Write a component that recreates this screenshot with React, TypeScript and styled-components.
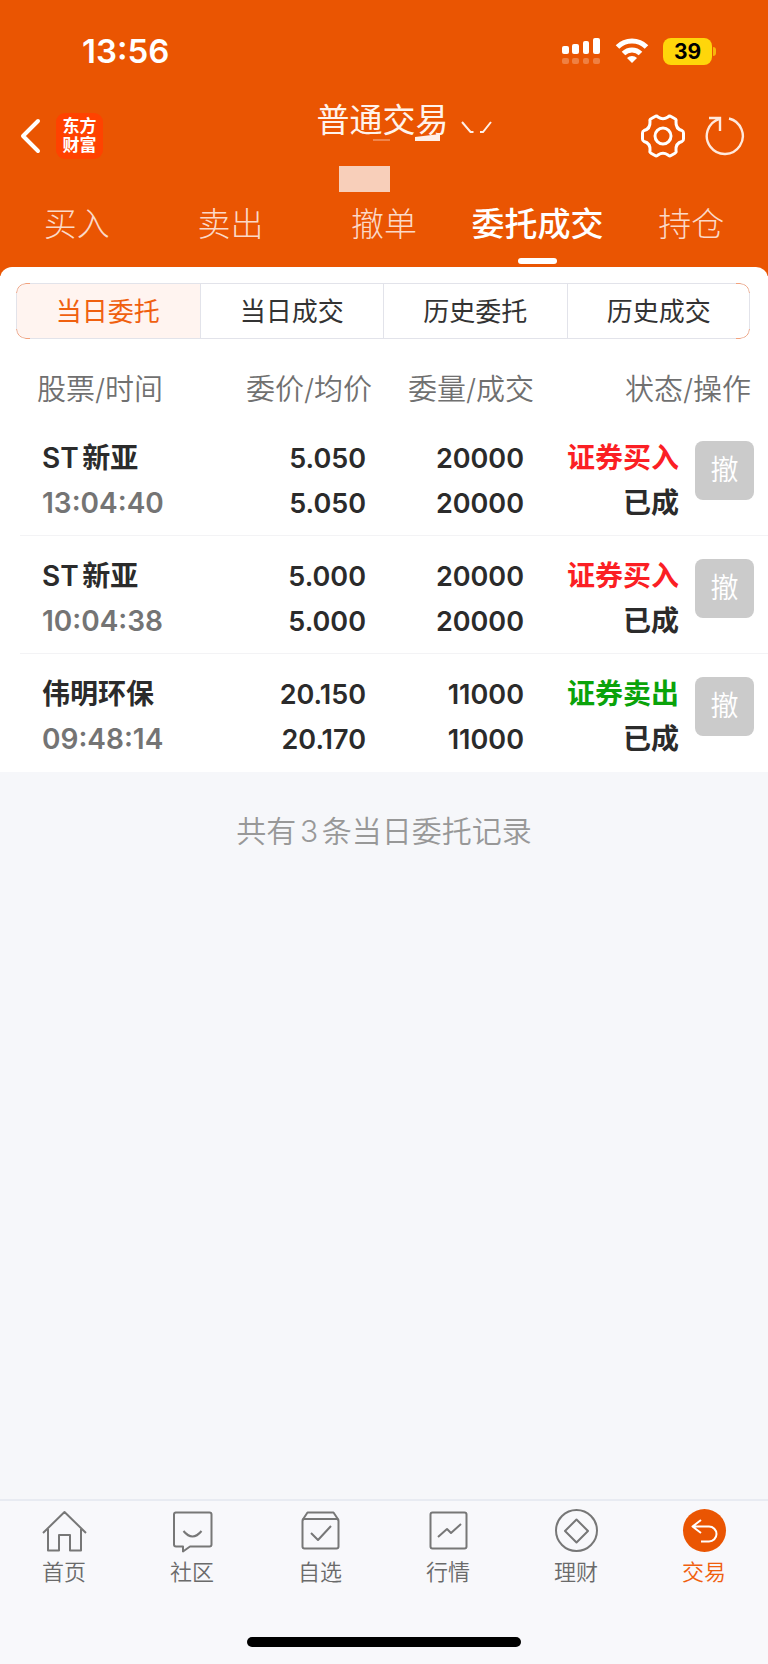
import React from "react";
import styled, { createGlobalStyle } from "styled-components";

const ORANGE = "#ea5502";

const GlobalStyle = createGlobalStyle`
  * { box-sizing: border-box; }
  body {
    margin: 0;
    background: #f6f7fa;
    font-family: Inter, "Noto Sans CJK SC", sans-serif;
    color: #2b2b2b;
    text-autospace: normal;
  }
  button { font-family: inherit; border: 0; background: none; padding: 0; cursor: pointer; }
  svg { display: block; }
`;

const Page = styled.div`
  min-height: 100vh;
  display: flex;
  flex-direction: column;
`;

const Top = styled.header`
  background: ${ORANGE};
  color: #fff;
  padding-bottom: 12px;
`;

const StatusBar = styled.div`
  height: 102px;
  padding: 0 52px 0 82px;
  display: flex;
  align-items: center;
  justify-content: space-between;
`;

const Clock = styled.time`
  font-size: 33px;
  font-weight: 600;
`;

const Indicators = styled.div`
  display: flex;
  align-items: center;
  gap: 14px;
`;

const BatteryBox = styled.div`
  display: flex;
  align-items: center;
  gap: 1px;
`;

const BatteryLevel = styled.span`
  width: 49px;
  height: 27px;
  border-radius: 8px;
  background: #ffd60a;
  color: #000;
  font-size: 21px;
  font-weight: 700;
  line-height: 27px;
  text-align: center;
`;

const BatteryTip = styled.span`
  width: 3px;
  height: 9px;
  border-radius: 0 4px 4px 0;
  background: #f7b50a;
`;

const TitleBar = styled.div`
  display: grid;
  grid-template-columns: 1fr auto 1fr;
  align-items: start;
  height: 98px;
  padding: 0 23px 0 20px;
`;

const Side = styled.div<{ $end?: boolean }>`
  height: 68px;
  display: flex;
  align-items: center;
  justify-content: ${(p) => (p.$end ? "flex-end" : "flex-start")};
  gap: ${(p) => (p.$end ? "20px" : "14px")};
`;

const Logo = styled.a`
  width: 47px;
  height: 46px;
  border-radius: 9px;
  background: #ff4200;
  color: #fff;
  font-size: 17px;
  font-weight: 700;
  line-height: 19px;
  padding-top: 4px;
  text-align: center;
  text-decoration: none;
`;

const TitleBlock = styled.div`
  display: flex;
  flex-direction: column;
  align-items: center;
  gap: 28px;
`;

const Title = styled.h1`
  position: relative;
  margin: 0;
  font-size: 33px;
  font-weight: 400;
  line-height: 36px;
  color: #fff3ec;
`;

const TitleMarks = styled.svg`
  position: absolute;
  left: 0;
  top: 0;
`;

const MaskedAccount = styled.div`
  width: 51px;
  height: 26px;
  margin-right: 36px;
  background: #f8cfba;
`;

const Tabs = styled.nav`
  display: grid;
  grid-template-columns: repeat(5, 1fr);
`;

const Tab = styled.button<{ $active?: boolean }>`
  display: flex;
  flex-direction: column;
  align-items: center;
  gap: 10px;
  font-size: 33px;
  line-height: 48px;
  white-space: nowrap;
  font-weight: ${(p) => (p.$active ? 500 : 300)};
  color: ${(p) => (p.$active ? "#fff" : "#fbd9c8")};
  &::after {
    content: "";
    width: 39px;
    height: 6px;
    border-radius: 3px;
    background: ${(p) => (p.$active ? "#fff" : "transparent")};
  }
`;

const Card = styled.main`
  margin-top: -9px;
  padding-top: 16px;
  background: #fff;
  border-radius: 12px 12px 0 0;
`;

const Segments = styled.div`
  position: relative;
  display: grid;
  grid-template-columns: repeat(4, 1fr);
  margin: 0 18px 0 16px;
  border-radius: 10px;
  overflow: hidden;
`;

/* Outline of the group; the accent variant shows only at the rounded corners. */
const Outline = styled.span<{ $accent?: boolean }>`
  position: absolute;
  inset: 0;
  border: 1px solid ${(p) => (p.$accent ? "#f4a27c" : "#e2e3ea")};
  border-radius: 10px;
  pointer-events: none;
  ${(p) =>
    p.$accent &&
    `
    mask:
      linear-gradient(to right, #000 14px, transparent 14px calc(100% - 14px), #000 calc(100% - 14px)),
      linear-gradient(to bottom, #000 10px, transparent 10px calc(100% - 10px), #000 calc(100% - 10px));
    mask-composite: intersect;
  `}
`;

const Segment = styled.button<{ $active?: boolean }>`
  height: 56px;
  padding-bottom: 3px;
  font-size: 26px;
  color: ${(p) => (p.$active ? "#f0600f" : "#333")};
  background: ${(p) => (p.$active ? "#fff4f0" : "#fff")};
  & + & { border-left: 1px solid #e2e3ea; }
`;

const Table = styled.table`
  width: calc(100% - 20px);
  margin: 23px 0 0 20px;
  table-layout: fixed;
  border-collapse: separate;
  border-spacing: 0;
`;

const Col = styled.col<{ $width?: number }>`
  width: ${(p) => (p.$width ? `${p.$width}px` : "auto")};
`;

const Th = styled.th<{ $align?: string; $pad?: number }>`
  height: 56px;
  padding: 0 ${(p) => p.$pad ?? 0}px 0 17px;
  font-size: 29px;
  font-weight: 350;
  line-height: 56px;
  color: #707070;
  white-space: nowrap;
  text-align: ${(p) => p.$align ?? "right"};
`;

const Td = styled.td<{ $align?: string; $pad?: number }>`
  height: 118px;
  padding: 18px ${(p) => p.$pad ?? 6}px 9px 22px;
  vertical-align: top;
  line-height: 45px;
  white-space: nowrap;
  text-align: ${(p) => p.$align ?? "right"};
`;

const StatusTd = styled(Td)`
  padding-left: 0;
`;

const ActionTd = styled(Td)`
  padding: 23px 14px 0 0;
`;

const Row = styled.tr`
  &:not(:last-child) > td { border-bottom: 1px solid #f3f3f5; }
`;

const Figure = styled.div`
  font-size: 27px;
  font-weight: 600;
`;

const Time = styled.div`
  font-size: 28px;
  font-weight: 600;
  color: #747474;
`;

const Label = styled.div<{ $tone?: "buy" | "sell" }>`
  font-size: 28px;
  font-weight: 600;
  color: ${(p) => (p.$tone === "buy" ? "#fb1f24" : p.$tone === "sell" ? "#0aa30a" : "inherit")};
`;

const CancelButton = styled.button`
  display: block;
  margin-left: auto;
  width: 59px;
  height: 59px;
  border-radius: 8px;
  background: #cbcbcb;
  color: #fff;
  font-size: 28px;
  font-weight: 350;
  line-height: 59px;
`;

const Summary = styled.p`
  flex: 1;
  margin: 0;
  padding-top: 39px;
  font-size: 30px;
  font-weight: 350;
  line-height: 40px;
  text-align: center;
  color: #989898;
`;

const Bottom = styled.footer`
  border-top: 2px solid #e8ebf2;
  background: #f8f8fb;
  padding-bottom: 17px;
`;

const BottomNav = styled.nav`
  display: grid;
  grid-template-columns: repeat(6, 1fr);
  padding-top: 8px;
`;

const NavItem = styled.a<{ $active?: boolean }>`
  display: flex;
  flex-direction: column;
  align-items: center;
  font-size: 22px;
  font-weight: 350;
  line-height: 36px;
  text-decoration: none;
  color: ${(p) => (p.$active ? "#f0600f" : "#6a6a6a")};
`;

const HomeIndicator = styled.div`
  width: 274px;
  height: 10px;
  margin: 47px auto 0;
  border-radius: 5px;
  background: #000;
`;

const Signal = () => (
  <svg width="40" height="28" viewBox="0 0 40 28" fill="#fff">
    <rect x="1" y="9" width="7" height="8" rx="2" />
    <rect x="11" y="7" width="7" height="10" rx="2" />
    <rect x="22" y="4" width="6" height="13" rx="2" />
    <rect x="32" y="1" width="7" height="16" rx="2" />
    <g opacity="0.25">
      <rect x="1" y="21" width="7" height="6" rx="2" />
      <rect x="11" y="21" width="7" height="6" rx="2" />
      <rect x="22" y="21" width="6" height="6" rx="2" />
      <rect x="32" y="21" width="7" height="6" rx="2" />
    </g>
  </svg>
);

const Wifi = () => (
  <svg width="34" height="26" viewBox="0 0 34 26" fill="none" stroke="#fff" strokeWidth="5">
    <path d="M2.5 9a20.500 20.500 0 0 1 29 0" />
    <path d="M8.500 15.500a12 12 0 0 1 17 0" />
    <path d="M17 25l-5-5a7 7 0 0 1 10 0z" fill="#fff" stroke="none" />
  </svg>
);

const Back = () => (
  <svg width="22" height="36" viewBox="0 0 22 36" fill="none" stroke="#fff" strokeWidth="4" strokeLinecap="round" strokeLinejoin="round">
    <path d="M18 3L3 18l15 15" />
  </svg>
);

const Gear = () => (
  <svg width="44" height="44" viewBox="0 0 44 44" fill="none" stroke="#fff" strokeWidth="3" strokeLinejoin="round">
    <path d="M14.500 2.200Q16 1.800 17 3Q22 6.500 27 3Q28 1.800 29.500 2.200L34 4.800Q35.500 5.600 35 7.500Q34.500 15 41 16.500Q42.500 17.200 42.500 19V25Q42.500 26.800 41 27.500Q34.500 29 35 36.500Q35.500 38.400 34 39.200L29.500 41.800Q28 42.200 27 41Q22 37.500 17 41Q16 42.200 14.500 41.800L10 39.200Q8.500 38.400 9 36.500Q9.500 29 3 27.500Q1.500 26.800 1.500 25V19Q1.500 17.200 3 16.500Q9.500 15 9 7.500Q8.500 5.600 10 4.800Z" />
    <circle cx="22" cy="22" r="8" />
  </svg>
);

const Refresh = () => (
  <svg width="40" height="40" viewBox="0 0 40 40" fill="none" stroke="#ffe9dd" strokeWidth="2.400">
    <path d="M24 2.500A18 18 0 1 1 14.500 2.800M4 2h11v13" />
  </svg>
);

const NAV_ICONS: Record<string, React.ReactNode> = {
  home: <path d="M1 24L22.500 3L44 24M6 20V41.500H17V26H28V41.500H39V20" />,
  chat: (
    <>
      <path d="M5.500 3.500h34q2 0 2 2v30q0 2-2 2H20l-7 5v-5H6q-2 0-2-2v-30q0-2 2-2z" />
      <path d="M13.500 22q9 11 18 0" />
    </>
  ),
  pick: (
    <>
      <rect x="4.500" y="10" width="36" height="29.500" rx="2" />
      <path d="M4.500 11l5-7.500h26l5 7.500M13 24l7 7L33 17" />
    </>
  ),
  chart: (
    <>
      <rect x="4.500" y="3.500" width="36" height="36" rx="2" />
      <path d="M12 28l9-8 4 4 10-9" />
    </>
  ),
  wealth: (
    <>
      <circle cx="22.500" cy="21.500" r="20.500" />
      <path d="M22.500 10.500l11.500 11.500-11.500 11.500-11.500-11.500z" />
    </>
  ),
  trade: (
    <>
      <circle cx="22.500" cy="21.500" r="21.500" fill={ORANGE} stroke="none" />
      <path d="M19 11l-8.500 6.500L19 24M10.500 17.500H27a7.500 7.500 0 0 1 0 15h-8" stroke="#fff" />
    </>
  ),
};

const NavIcon = ({ name }: { name: string }) => (
  <svg width="45" height="45" viewBox="0 0 45 45" fill="none" stroke="#777" strokeWidth="2" strokeLinejoin="round">
    {NAV_ICONS[name]}
  </svg>
);

const TABS = ["买入", "卖出", "撤单", "委托成交", "持仓"];
const SEGMENTS = ["当日委托", "当日成交", "历史委托", "历史成交"];
const ORDERS = [
  { name: "ST新亚", time: "13:04:40", price: "5.050", avg: "5.050", qty: "20000", side: "证券买入", tone: "buy" as const },
  { name: "ST新亚", time: "10:04:38", price: "5.000", avg: "5.000", qty: "20000", side: "证券买入", tone: "buy" as const },
  { name: "伟明环保", time: "09:48:14", price: "20.150", avg: "20.170", qty: "11000", side: "证券卖出", tone: "sell" as const },
];
const NAV = [
  ["home", "首页"],
  ["chat", "社区"],
  ["pick", "自选"],
  ["chart", "行情"],
  ["wealth", "理财"],
  ["trade", "交易"],
];

export default function App() {
  return (
    <Page>
      <GlobalStyle />
      <Top>
        <StatusBar>
          <Clock>13:56</Clock>
          <Indicators>
            <Signal />
            <Wifi />
            <BatteryBox>
              <BatteryLevel>39</BatteryLevel>
              <BatteryTip />
            </BatteryBox>
          </Indicators>
        </StatusBar>
        <TitleBar>
          <Side>
            <button aria-label="返回"><Back /></button>
            <Logo href="#">东方<br />财富</Logo>
          </Side>
          <TitleBlock>
            <Title>
              普通交易
              <TitleMarks width="180" height="42" viewBox="0 0 180 42">
                <path d="M98 35l25-3v7H98z" fill="#fff0e8" />
                <path d="M56 38h17" stroke="#f6b897" />
                <path d="M145 20l8.500 10h3M174 20l-8 10h-3" stroke="#fff0e8" strokeWidth="2" fill="none" />
              </TitleMarks>
            </Title>
            <MaskedAccount />
          </TitleBlock>
          <Side $end>
            <button aria-label="设置"><Gear /></button>
            <button aria-label="刷新"><Refresh /></button>
          </Side>
        </TitleBar>
        <Tabs>
          {TABS.map((t) => (
            <Tab key={t} $active={t === "委托成交"}>{t}</Tab>
          ))}
        </Tabs>
      </Top>
      <Card>
        <Segments>
          {SEGMENTS.map((s, i) => (
            <Segment key={s} $active={i === 0}>{s}</Segment>
          ))}
          <Outline />
          <Outline $accent />
        </Segments>
        <Table>
          <colgroup>
            <Col />
            <Col $width={152} />
            <Col $width={162} />
            <Col $width={151} />
            <Col $width={83} />
          </colgroup>
          <thead>
            <tr>
              <Th $align="left">股票/时间</Th>
              <Th>委价/均价</Th>
              <Th>委量/成交</Th>
              <Th colSpan={2} $pad={17}>状态/操作</Th>
            </tr>
          </thead>
          <tbody>
            {ORDERS.map((o) => (
              <Row key={o.time}>
                <Td $align="left">
                  <Label>{o.name}</Label>
                  <Time>{o.time}</Time>
                </Td>
                <Td>
                  <Figure>{o.price}</Figure>
                  <Figure>{o.avg}</Figure>
                </Td>
                <Td $pad={10}>
                  <Figure>{o.qty}</Figure>
                  <Figure>{o.qty}</Figure>
                </Td>
                <StatusTd>
                  <Label $tone={o.tone}>{o.side}</Label>
                  <Label>已成</Label>
                </StatusTd>
                <ActionTd>
                  <CancelButton>撤</CancelButton>
                </ActionTd>
              </Row>
            ))}
          </tbody>
        </Table>
      </Card>
      <Summary>共有3条当日委托记录</Summary>
      <Bottom>
        <BottomNav>
          {NAV.map(([icon, label]) => (
            <NavItem key={icon} href="#" $active={icon === "trade"}>
              <NavIcon name={icon} />
              {label}
            </NavItem>
          ))}
        </BottomNav>
        <HomeIndicator />
      </Bottom>
    </Page>
  );
}
